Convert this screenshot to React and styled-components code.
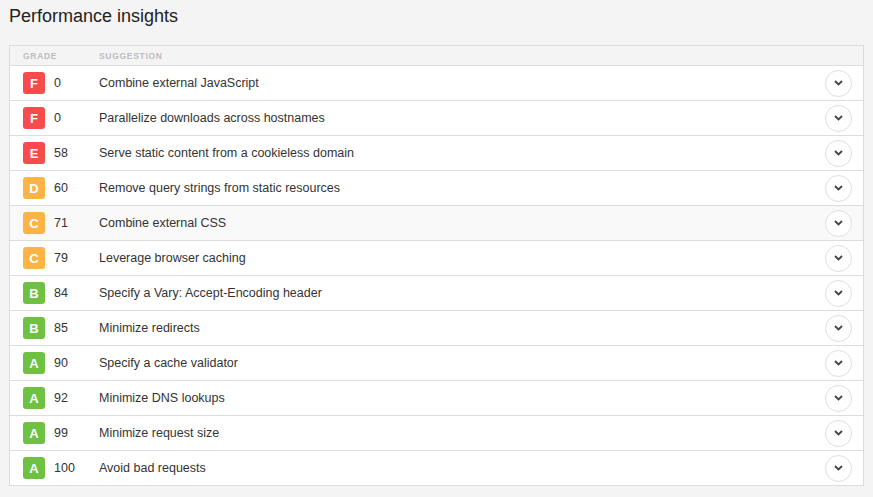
import React from "react";
import styled, { createGlobalStyle } from "styled-components";

const GlobalStyle = createGlobalStyle`
  body {
    margin: 0;
    background: #f4f4f4;
    font-family: "Liberation Sans", Arial, sans-serif;
  }
`

const Page = styled.div`
  padding: 0 9px 0 9px;
  width: 855px;
`

const Title = styled.h2`
  margin: 0;
  padding-top: 6px;
  height: 39px;
  font-size: 18px;
  font-weight: normal;
  color: #222;
  line-height: 20px;
`

const Table = styled.div`
  border: 1px solid #dcdcdc;
  border-bottom: 0;
`

const HeadRow = styled.div`
  display: flex;
  align-items: center;
  height: 19px;
  border-bottom: 1px solid #dcdcdc;
  font-size: 8.5px;
  font-weight: bold;
  color: #bdbdbd;
  letter-spacing: 0.7px;
  text-transform: uppercase;
`

const GradeHead = styled.div`
  width: 89px;
  padding-left: 13px;
  box-sizing: border-box;
`

const Row = styled.div`
  display: flex;
  align-items: center;
  height: 34px;
  border-bottom: 1px solid #dcdcdc;
  background: ${p => (p.$hover ? "#f9f9f9" : "#fff")};
  font-size: 12.5px;
  color: #333;
`

const Badge = styled.div`
  margin-left: 13px;
  width: 22px;
  height: 22px;
  border-radius: 3px;
  background: ${p => p.$color};
  color: #fff;
  font-weight: bold;
  font-size: 13px;
  display: flex;
  align-items: center;
  justify-content: center;
`

const Score = styled.div`
  width: 54px;
  padding-left: 9px;
  box-sizing: border-box;
`

const Suggestion = styled.div`
  flex: 1;
`

const Toggle = styled.button`
  width: 27px;
  height: 27px;
  margin-right: 11px;
  border-radius: 50%;
  border: 1px solid #dedede;
  background: #fff;
  padding: 0;
  display: flex;
  align-items: center;
  justify-content: center;
`

const colors = {
  F: "#f94b4b",
  E: "#f94b4b",
  D: "#fdb445",
  C: "#fdb445",
  B: "#6fc142",
  A: "#6fc142",
}

const rows = [
  ["F", 0, "Combine external JavaScript"],
  ["F", 0, "Parallelize downloads across hostnames"],
  ["E", 58, "Serve static content from a cookieless domain"],
  ["D", 60, "Remove query strings from static resources"],
  ["C", 71, "Combine external CSS"],
  ["C", 79, "Leverage browser caching"],
  ["B", 84, "Specify a Vary: Accept-Encoding header"],
  ["B", 85, "Minimize redirects"],
  ["A", 90, "Specify a cache validator"],
  ["A", 92, "Minimize DNS lookups"],
  ["A", 99, "Minimize request size"],
  ["A", 100, "Avoid bad requests"],
]

const Chevron = () => (
  <svg width="9" height="6" viewBox="0 0 9 6">
    <path d="M1 1l3.5 3.5L8 1" fill="none" stroke="#444" strokeWidth="1.8" />
  </svg>
)

export default function App() {
  return (
    <>
      <GlobalStyle />
      <Page>
        <Title>Performance insights</Title>
        <Table>
          <HeadRow>
            <GradeHead>Grade</GradeHead>
            <div>Suggestion</div>
          </HeadRow>
          {rows.map(([grade, score, text], i) => (
            <Row key={i} $hover={i === 4}>
              <Badge $color={colors[grade]}>{grade}</Badge>
              <Score>{score}</Score>
              <Suggestion>{text}</Suggestion>
              <Toggle>
                <Chevron />
              </Toggle>
            </Row>
          ))}
        </Table>
      </Page>
    </>
  )
}
